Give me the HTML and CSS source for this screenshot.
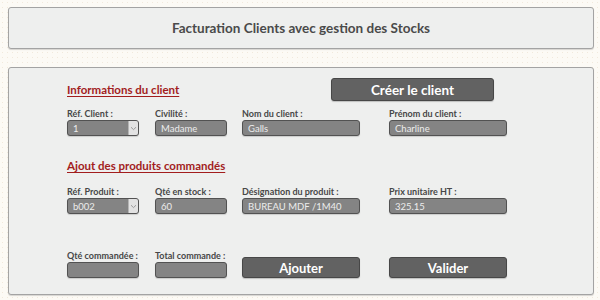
FILE: index.html
```html
<!DOCTYPE html>
<html lang="fr">
<head>
<meta charset="utf-8">
<title>Facturation Clients</title>
<link rel="stylesheet" href="styles.css">
</head>
<body>
<div class="page">
  <header class="title-box">Facturation Clients avec gestion des Stocks</header>
  <main class="panel">
    <div class="grid">
      <h2 class="section-title span2">Informations du client</h2>
      <div class="span2 btn-cell"><button class="btn btn-create">Créer le client</button></div>

      <div class="field first">
        <label>Réf. Client :</label>
        <div class="input select"><span>1</span><span class="arrow"><svg width="7" height="5" viewBox="0 0 7 5"><path d="M1 1.2 L3.5 3.6 L6 1.2" fill="none" stroke="#9a9a9a" stroke-width="1"/></svg></span></div>
      </div>
      <div class="field first">
        <label>Civilité :</label>
        <div class="input"><span>Madame</span></div>
      </div>
      <div class="field first">
        <label>Nom du client :</label>
        <div class="input wide"><span>Galls</span></div>
      </div>
      <div class="field first">
        <label>Prénom du client :</label>
        <div class="input wide"><span>Charline</span></div>
      </div>

      <h2 class="section-title span4 second">Ajout des produits commandés</h2>

      <div class="field second-row">
        <label>Réf. Produit :</label>
        <div class="input select"><span>b002</span><span class="arrow"><svg width="7" height="5" viewBox="0 0 7 5"><path d="M1 1.2 L3.5 3.6 L6 1.2" fill="none" stroke="#9a9a9a" stroke-width="1"/></svg></span></div>
      </div>
      <div class="field second-row">
        <label>Qté en stock :</label>
        <div class="input"><span>60</span></div>
      </div>
      <div class="field second-row">
        <label>Désignation du produit :</label>
        <div class="input wide"><span>BUREAU MDF /1M40</span></div>
      </div>
      <div class="field second-row">
        <label>Prix unitaire HT :</label>
        <div class="input wide"><span>325.15</span></div>
      </div>

      <div class="field third">
        <label>Qté commandée :</label>
        <div class="input"></div>
      </div>
      <div class="field third">
        <label>Total commande :</label>
        <div class="input"></div>
      </div>
      <div class="third btn-bottom"><button class="btn btn-action">Ajouter</button></div>
      <div class="third btn-bottom"><button class="btn btn-action">Valider</button></div>
    </div>
  </main>
</div>
</body>
</html>
```

FILE: styles.css
```css
* { box-sizing: border-box; }
html, body { margin: 0; padding: 0; }
body {
  width: 600px;
  height: 300px;
  overflow: hidden;
  background-color: #fcfaf5;
  background-image: radial-gradient(#f1e9dc 0.6px, transparent 0.9px);
  background-size: 5px 5px;
  font-family: Lato, "Liberation Sans", sans-serif;
}
.page {
  padding: 7px 6px 0 8px;
}
.title-box {
  height: 42px;
  background: #eeefee;
  border: 1px solid #a3a3a3;
  border-radius: 3px;
  box-shadow: 0 1px 1px rgba(0,0,0,0.15);
  display: flex;
  align-items: center;
  justify-content: center;
  font-weight: 700;
  font-size: 13.5px;
  color: #4a4a4a;
  padding-bottom: 1px;
}
.panel {
  margin-top: 18px;
  height: 228px;
  background: #eeefee;
  border: 1px solid #a3a3a3;
  border-radius: 3px;
  box-shadow: 0 1px 1px rgba(0,0,0,0.15);
  padding: 10px 0 0 58px;
}
.grid {
  display: grid;
  grid-template-columns: 88px 87px 147px 118px;
  align-items: end;
}
.span2 { grid-column: span 2; }
.span4 { grid-column: span 4; }
.section-title {
  margin: 0;
  font-size: 11.5px;
  font-weight: 700;
  color: #a21d1d;
  text-decoration: underline;
  text-underline-offset: 2px;
  align-self: center;
  line-height: 14px;
  padding-top: 1px;
}
.section-title.second {
  margin-top: 22px;
}
.btn-cell { padding-left: 89px; }
.btn {
  font-family: inherit;
  font-weight: 700;
  color: #ffffff;
  background: #626262;
  border: 1px solid #474747;
  border-radius: 3px;
  box-shadow: 0 1px 1px rgba(0,0,0,0.2);
  padding: 0;
  display: flex;
  align-items: center;
  justify-content: center;
}
.btn-create {
  width: 163px;
  height: 23px;
  font-size: 13.5px;
}
.field {
  display: flex;
  flex-direction: column;
}
.field.first { margin-top: 7px; }
.field.second-row { margin-top: 13px; }
.field label {
  font-size: 9px;
  font-weight: 700;
  color: #474747;
  line-height: 11px;
  height: 11px;
  margin-bottom: 1px;
  white-space: nowrap;
}
.input {
  width: 72px;
  height: 16px;
  background: #848484;
  border: 1px solid #525252;
  border-radius: 3px;
  box-shadow: 0 1px 1px rgba(0,0,0,0.15);
  display: flex;
  align-items: center;
  padding-left: 5px;
  font-size: 9.5px;
  color: #ececec;
}
.input.wide { width: 118px; }
.select {
  padding-right: 2px;
}
.select span:first-child { flex: 1; }
.select .arrow {
  width: 10px;
  height: 14px;
  background: #e2e2e2;
  border-left: 1px solid #b5b5b5;
  border-radius: 0 2px 2px 0;
  display: flex;
  align-items: center;
  justify-content: center;
  margin-right: -2px;
}
.third { margin-top: 36px; }
.btn-bottom { align-self: end; }
.btn-action {
  width: 118px;
  height: 21px;
  font-size: 13px;
}
```
